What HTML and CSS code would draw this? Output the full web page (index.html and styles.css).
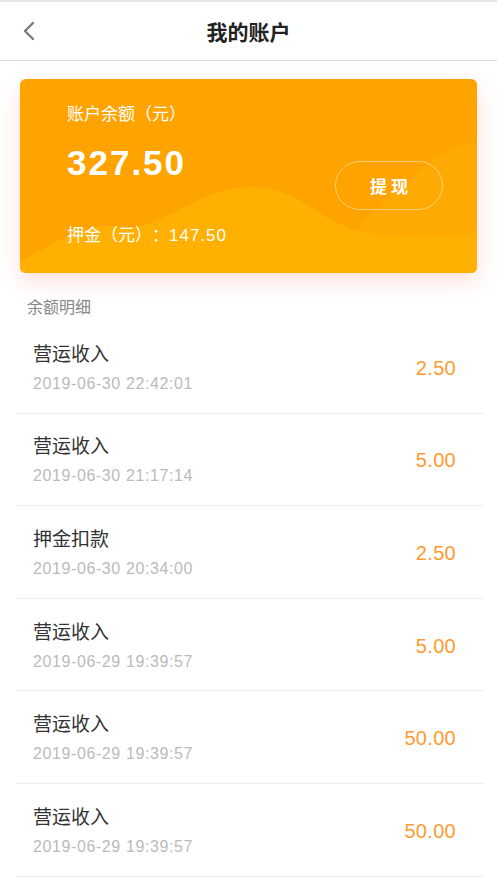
FILE: index.html
```html
<!DOCTYPE html>
<html lang="zh-CN">
<head>
    <meta charset="UTF-8">
    <meta name="viewport" content="width=device-width, initial-scale=1.0">
    <title>我的账户</title>
    <link rel="stylesheet" href="styles.css">
</head>

<body>

    <!-- Header -->
    <div class="header">
        <a class="back" href="#">
            <svg width="14" height="20" viewBox="0 0 14 20">
                <path d="M11 2 L3 10 L11 18" fill="none" stroke="#7a7a7a" stroke-width="2.4" stroke-linecap="round" stroke-linejoin="round"/>
            </svg>
        </a>
        <div class="title">我的账户</div>
    </div>

    <!-- Balance card -->
    <div class="card">
        <svg class="wave" viewBox="0 0 457 194" preserveAspectRatio="none">
            <path d="M330 156 C370 120 410 70 457 62 V194 H330 Z" fill="#ffab04" opacity="0.7"/>
            <path d="M0 182 C30 168 62 142 100 148 C140 154 180 106 234 108 C288 110 300 150 360 156 C400 160 430 160 457 152 V194 H0 Z" fill="#ffb000"/>
        </svg>
        <div class="card-body">
            <div class="card-info">
                <div class="card-label">账户余额（元）</div>
                <div class="card-balance">327.50</div>
                <div class="card-deposit">押金（元）：<span>147.50</span></div>
            </div>
            <button class="withdraw">提现</button>
        </div>
    </div>

    <div class="section-title">余额明细</div>

    <!-- Detail list -->
    <div class="list" id="list"></div>

    <script>
        const records = [
            { name: "营运收入", time: "2019-06-30 22:42:01", amount: "2.50" },
            { name: "营运收入", time: "2019-06-30 21:17:14", amount: "5.00" },
            { name: "押金扣款", time: "2019-06-30 20:34:00", amount: "2.50" },
            { name: "营运收入", time: "2019-06-29 19:39:57", amount: "5.00" },
            { name: "营运收入", time: "2019-06-29 19:39:57", amount: "50.00" },
            { name: "营运收入", time: "2019-06-29 19:39:57", amount: "50.00" },
        ];

        const list = document.getElementById("list");
        records.forEach(item => {
            const row = document.createElement("div");
            row.classList.add("row");
            row.innerHTML = `
                <div class="row-left">
                    <div class="row-name">${item.name}</div>
                    <div class="row-time">${item.time}</div>
                </div>
                <div class="row-amount">${item.amount}</div>
            `;
            list.appendChild(row);
        });
    </script>

</body>
</html>
```

FILE: styles.css
```css
/* Base */
body {
    font-family: "Liberation Sans", "Noto Sans CJK SC", sans-serif;
    margin: 0;
    padding: 0;
    background: #fff;
    color: #333;
    text-spacing-trim: space-all;
}

/* Header */
.header {
    position: relative;
    height: 58px;
    border-top: 2px solid #e6e6e6;
    border-bottom: 1px solid #dedede;
    display: flex;
    align-items: center;
    justify-content: center;
}

.back {
    position: absolute;
    left: 22px;
    top: 19px;
    display: flex;
}

.title {
    font-size: 21px;
    font-weight: bold;
    color: #222;
}

/* Card */
.card {
    position: relative;
    overflow: hidden;
    margin: 18px 20px 0;
    height: 194px;
    border-radius: 6px;
    background: #ffa300;
    box-shadow: 0 8px 22px rgba(255, 110, 90, 0.22);
}

.wave {
    position: absolute;
    left: 0;
    top: 0;
    width: 100%;
    height: 100%;
}

.card-body {
    position: relative;
    display: flex;
    align-items: center;
    justify-content: space-between;
    padding: 25px 34px 0 47px;
    color: #fff;
}

.card-label {
    font-size: 17px;
    line-height: 22px;
}

.card-balance {
    font-size: 35px;
    font-weight: bold;
    letter-spacing: 2px;
    line-height: 40px;
    margin-top: 17px;
}

.card-deposit {
    font-size: 17px;
    line-height: 22px;
    margin-top: 42px;
}

.card-deposit span {
    letter-spacing: 1px;
}

.withdraw {
    width: 108px;
    height: 49px;
    margin-top: 20px;
    border: 1px solid rgba(255, 255, 255, 0.45);
    border-radius: 25px;
    background: transparent;
    color: #fff;
    font-family: inherit;
    font-size: 17px;
    font-weight: bold;
    letter-spacing: 4px;
    padding: 0 0 0 4px;
}

/* List */
.section-title {
    font-size: 16px;
    color: #888;
    padding: 24px 0 0 27px;
    line-height: 22px;
}

.list {
    margin: 0 14px 0 16px;
    padding-top: 2px;
}

.row {
    height: 88.6px;
    padding-top: 3px;
    border-bottom: 1px solid #eee;
    display: flex;
    align-items: center;
    justify-content: space-between;
    padding-left: 17px;
    padding-right: 27px;
}

.row-name {
    font-size: 19px;
    line-height: 26px;
    color: #333;
}

.row-time {
    font-size: 16px;
    line-height: 22px;
    margin-top: 5px;
    color: #bbb;
    letter-spacing: 0.6px;
}

.row-amount {
    font-size: 20px;
    color: #ff9a30;
    letter-spacing: 0.3px;
}
```
